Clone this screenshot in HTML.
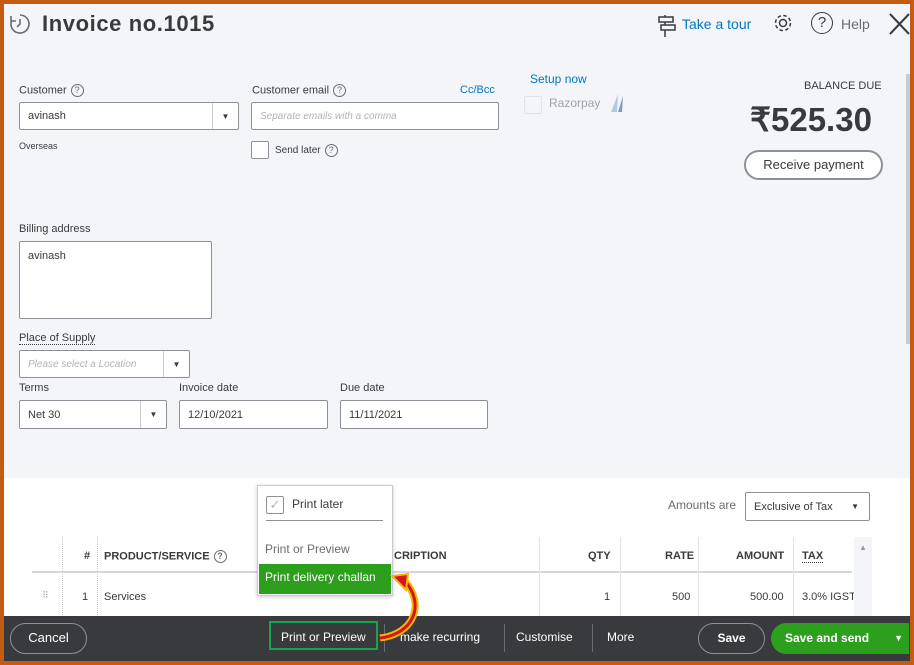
<!DOCTYPE html>
<html><head><style>
*{box-sizing:border-box;margin:0;padding:0;white-space:nowrap}
body{width:914px;height:665px;overflow:hidden;font-family:"Liberation Sans",sans-serif;color:#393a3d;background:#c55a11;position:relative}
.frame{position:absolute;left:4px;top:4px;width:906px;height:657px;background:#f4f5f8;overflow:hidden}
.a{position:absolute}
.lbl{font-size:11px;color:#393a3d}
.inp{position:absolute;background:#fff;border:1px solid #8d9096;border-radius:2px;font-size:11px;padding:0 8px;display:flex;align-items:center}
.ph{color:#b0b3b8;font-style:italic}
.q{display:inline-block;width:13px;height:13px;border:1px solid #6b6c72;border-radius:50%;font-size:9px;text-align:center;line-height:11px;color:#6b6c72;vertical-align:middle;margin-left:4px}
.dd{position:absolute;right:0;top:0;bottom:0;width:26px;border-left:1px solid #ccc;display:flex;align-items:center;justify-content:center;font-size:8px}
</style></head><body>
<div class="frame">
<svg class="a" style="left:4px;top:8px" width="24" height="24" viewBox="0 0 24 24"><path d="M12 3a9 9 0 1 1-8.5 6" fill="none" stroke="#6b6c72" stroke-width="1.6"/><path d="M12 7v5l-3 3" fill="none" stroke="#6b6c72" stroke-width="1.6"/><path d="M3 4v5h5" fill="none" stroke="#6b6c72" stroke-width="1.6"/></svg>
<div class="a" style="left:38px;top:7px;font-size:22px;font-weight:bold;letter-spacing:0.6px;color:#393a3d">Invoice no.1015</div>
<svg class="a" style="left:652px;top:10px" width="22" height="24" viewBox="0 0 22 24"><rect x="3" y="3" width="14" height="5" fill="none" stroke="#393a3d" stroke-width="1.5"/><rect x="5" y="11" width="14" height="5" fill="none" stroke="#393a3d" stroke-width="1.5"/><path d="M9 1v2M9 8v3M9 16v7" stroke="#393a3d" stroke-width="1.5"/></svg>
<div class="a" style="left:678px;top:12px;font-size:14px;color:#0077c5">Take a tour</div>
<svg class="a" style="left:768px;top:8px" width="22" height="22" viewBox="0 0 22 22"><circle cx="11" cy="11" r="3.5" fill="none" stroke="#393a3d" stroke-width="1.5"/><circle cx="11" cy="11" r="7.5" fill="none" stroke="#393a3d" stroke-width="1.5" stroke-dasharray="3.5 2.4"/></svg>
<div class="a" style="left:807px;top:8px;width:22px;height:22px;border:1.6px solid #393a3d;border-radius:50%;text-align:center;font-size:15px;line-height:19px">?</div>
<div class="a" style="left:837px;top:12px;font-size:14px;color:#6b6c72">Help</div>
<svg class="a" style="left:884px;top:8px" width="22" height="24"><path d="M2 2l19 20M21 2L2 22" stroke="#393a3d" stroke-width="2"/></svg>
<div class="a" style="left:902px;top:70px;width:4px;height:270px;background:#c8cbd0"></div>
<div class="a lbl" style="left:15px;top:80px">Customer<span class="q">?</span></div>
<div class="inp" style="left:15px;top:98px;width:220px;height:28px">avinash<div class="dd">▼</div></div>
<div class="a" style="left:15px;top:137px;font-size:9px">Overseas</div>
<div class="a lbl" style="left:248px;top:80px">Customer email<span class="q">?</span></div>
<div class="a" style="left:456px;top:80px;font-size:11px;color:#0077c5">Cc/Bcc</div>
<div class="inp" style="left:247px;top:98px;width:248px;height:28px"><span class="ph" style="font-size:10px">Separate emails with a comma</span></div>
<div class="a" style="left:247px;top:137px;width:18px;height:18px;border:1px solid #8d9096;background:#fff;border-radius:2px"></div>
<div class="a" style="left:271px;top:140px;font-size:10px">Send later<span class="q">?</span></div>
<div class="a" style="left:526px;top:68px;font-size:12px;color:#0077c5">Setup now</div>
<div class="a" style="left:520px;top:92px;width:18px;height:18px;border:1px solid #e2e3e6;border-radius:2px"></div>
<div class="a" style="left:545px;top:92px;font-size:12px;color:#a0a3a8">Razorpay</div>
<svg class="a" style="left:604px;top:90px" width="16" height="18"><path d="M10 0L3 18h6z" fill="#b4c8e0"/><path d="M15 2l-5 16h4z" fill="#7f9cc4"/></svg>
<div class="a" style="left:800px;top:76px;font-size:11px;color:#393a3d">BALANCE DUE</div>
<div class="a" style="left:746px;top:96px;font-size:33px;font-weight:bold">₹525.30</div>
<div class="a" style="left:740px;top:146px;width:139px;height:30px;border:2px solid #8d9096;border-radius:16px;background:#fff;font-size:13px;text-align:center;line-height:26px">Receive payment</div>
<div class="a lbl" style="left:15px;top:219px">Billing address</div>
<div class="inp" style="left:15px;top:237px;width:193px;height:78px;align-items:flex-start;padding-top:8px">avinash</div>
<div class="a lbl" style="left:15px;top:328px;border-bottom:1px dotted #393a3d">Place of Supply</div>
<div class="inp" style="left:15px;top:346px;width:171px;height:28px"><span class="ph" style="font-size:10px">Please select a Location</span><div class="dd">▼</div></div>
<div class="a lbl" style="left:15px;top:378px">Terms</div>
<div class="inp" style="left:15px;top:396px;width:148px;height:29px">Net 30<div class="dd">▼</div></div>
<div class="a lbl" style="left:175px;top:378px">Invoice date</div>
<div class="inp" style="left:175px;top:396px;width:149px;height:29px">12/10/2021</div>
<div class="a lbl" style="left:336px;top:378px">Due date</div>
<div class="inp" style="left:336px;top:396px;width:148px;height:29px">11/11/2021</div>
<div class="a" style="left:0;top:474px;width:906px;height:140px;background:#fff"></div>
<div class="a" style="left:664px;top:494px;font-size:12px;color:#6b6c72">Amounts are</div>
<div class="inp" style="left:741px;top:488px;width:125px;height:29px;font-size:11px">Exclusive of Tax<span style="position:absolute;right:10px;font-size:8px">▼</span></div>
<div class="a" style="left:28px;top:533px;width:820px;height:80px">
 <div class="a" style="left:0;top:34px;width:820px;height:2px;background:#d4d7dc"></div>
 <div class="a" style="left:30px;top:0;height:80px;border-left:1px dotted #ccc"></div>
 <div class="a" style="left:65px;top:0;height:80px;border-left:1px dotted #ccc"></div>
 <div class="a" style="left:507px;top:0;height:80px;border-left:1px solid #e2e3e6"></div>
 <div class="a" style="left:588px;top:0;height:80px;border-left:1px solid #e2e3e6"></div>
 <div class="a" style="left:666px;top:0;height:80px;border-left:1px solid #e2e3e6"></div>
 <div class="a" style="left:761px;top:0;height:80px;border-left:1px solid #e2e3e6"></div>
 <div class="a" style="left:52px;top:13px;font-size:11px;font-weight:bold">#</div>
 <div class="a" style="left:72px;top:13px;font-size:11px;font-weight:bold">PRODUCT/SERVICE<span class="q">?</span></div>
 <div class="a" style="left:362px;top:13px;font-size:11px;font-weight:bold">CRIPTION</div>
 <div class="a" style="left:556px;top:13px;font-size:11px;font-weight:bold">QTY</div>
 <div class="a" style="left:633px;top:13px;font-size:11px;font-weight:bold">RATE</div>
 <div class="a" style="left:704px;top:13px;font-size:11px;font-weight:bold">AMOUNT</div>
 <div class="a" style="left:770px;top:13px;font-size:11px;font-weight:bold;border-bottom:1px dotted #393a3d">TAX</div>
 <div class="a" style="left:10px;top:53px;font-size:9px;color:#aaa">⠿</div>
 <div class="a" style="left:50px;top:54px;font-size:11px">1</div>
 <div class="a" style="left:72px;top:54px;font-size:11px">Services</div>
 <div class="a" style="left:572px;top:54px;font-size:11px">1</div>
 <div class="a" style="left:640px;top:54px;font-size:11px">500</div>
 <div class="a" style="left:718px;top:54px;font-size:11px">500.00</div>
 <div class="a" style="left:770px;top:54px;font-size:11px">3.0% IGST</div>
 <div class="a" style="left:822px;top:0;width:18px;height:80px;background:#f4f5f8;font-size:8px;color:#999;text-align:center;padding-top:6px">▲</div>
</div>
<div class="a" style="left:253px;top:481px;width:136px;height:111px;background:#fff;border:1px solid #c8cbd0;box-shadow:0 1px 4px rgba(0,0,0,.2)">
 <div class="a" style="left:8px;top:10px;width:18px;height:18px;border:1px solid #8d9096;border-radius:2px;color:#b0b3b8;font-size:13px;text-align:center;line-height:16px">✓</div>
 <div class="a" style="left:34px;top:11px;font-size:12px">Print later</div>
 <div class="a" style="left:8px;top:34px;width:117px;height:1px;background:#8d9096"></div>
 <div class="a" style="left:7px;top:56px;font-size:12px;color:#6b6c72">Print or Preview</div>
 <div class="a" style="left:1px;top:78px;width:132px;height:30px;background:#2ca01c;color:#fff;font-size:12px;padding:6px 0 0 6px">Print delivery challan</div>
</div>
<div class="a" style="left:0;top:612px;width:906px;height:45px;background:#393a3d"></div>
<div class="a" style="left:6px;top:619px;width:77px;height:31px;border:1.5px solid #8d9096;border-radius:16px;color:#fff;font-size:13px;text-align:center;line-height:28px">Cancel</div>
<div class="a" style="left:265px;top:617px;width:109px;height:29px;border:2px solid #19a34a"></div>
<div class="a" style="left:277px;top:626px;color:#fff;font-size:12px">Print or Preview</div>
<div class="a" style="left:380px;top:620px;width:1px;height:28px;background:#6b6c72"></div>
<div class="a" style="left:396px;top:626px;color:#fff;font-size:12px">make recurring</div>
<div class="a" style="left:500px;top:620px;width:1px;height:28px;background:#6b6c72"></div>
<div class="a" style="left:512px;top:626px;color:#fff;font-size:12px">Customise</div>
<div class="a" style="left:588px;top:620px;width:1px;height:28px;background:#6b6c72"></div>
<div class="a" style="left:603px;top:626px;color:#fff;font-size:12px">More</div>
<div class="a" style="left:694px;top:619px;width:67px;height:31px;border:1.5px solid #8d9096;border-radius:16px;color:#fff;font-size:12px;font-weight:bold;text-align:center;line-height:28px">Save</div>
<div class="a" style="left:767px;top:619px;width:138px;height:31px;background:#2ca01c;border-radius:16px 0 0 16px;color:#fff;font-size:12px;font-weight:bold;line-height:31px;padding-left:14px">Save and send<span style="position:absolute;right:6px;font-size:9px">▼</span></div>
<svg class="a" style="left:370px;top:560px" width="60" height="80" viewBox="0 0 60 80"><path d="M6 74C40 70 52 40 30 16" fill="none" stroke="#f5b800" stroke-width="7"/><path d="M6 74C40 70 52 40 30 16" fill="none" stroke="#d7141a" stroke-width="3"/><path d="M18 12l16-2-2 16z" fill="#d7141a" stroke="#f5b800" stroke-width="2"/></svg>
</div>
</body></html>
